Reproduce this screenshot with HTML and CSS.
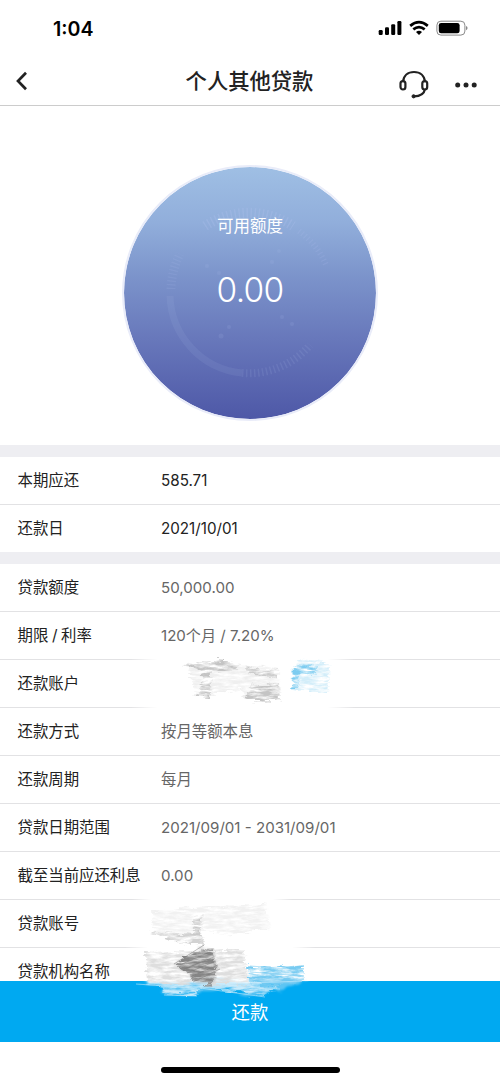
FILE: index.html
```html
<!DOCTYPE html>
<html lang="zh-CN">
<head>
<meta charset="utf-8">
<title>个人其他贷款</title>
<link rel="stylesheet" href="styles.css">
</head>
<body>
<div class="app">
  <header class="top">
    <div class="status">
      <span class="time">1:04</span>
      <svg class="status-icons" width="90" height="16" viewBox="0 0 90 16">
        <rect x="0.7" y="10" width="4" height="5" rx="1.2"/>
        <rect x="7" y="7.3" width="4" height="7.7" rx="1.2"/>
        <rect x="13.2" y="4.2" width="4" height="10.8" rx="1.2"/>
        <rect x="19.4" y="1" width="4" height="14" rx="1.2"/>
        <g fill="none" stroke="#000" stroke-width="2.7">
          <path d="M32.2 5.9Q41 -1.5 49.8 5.9"/>
          <path d="M35.3 9.4Q41 4.7 46.7 9.4"/>
        </g>
        <path d="M38 12Q41 9.7 44 12L41 15Z"/>
        <rect x="58.9" y="1.2" width="28" height="13.9" rx="4" fill="none" stroke="#888" stroke-width="1"/>
        <rect x="60.8" y="3" width="20.8" height="10.3" rx="2.3"/>
        <path d="M88 6V10.2Q89.6 9.6 89.6 8.1T88 6Z" fill="#888"/>
      </svg>
    </div>
    <nav class="nav">
      <svg class="back" width="12" height="20" viewBox="0 0 12 20"><path d="M10 1.8L2 10L10 18.2"/></svg>
      <h1 class="title">个人其他贷款</h1>
      <div class="actions">
        <svg class="headset" width="30" height="30" viewBox="0 0 30 30">
          <path d="M4 12.2C4.5 5.5 9 2 15 2S25.5 5.5 26 12.2"/>
          <rect x="1.5" y="11.2" width="4.9" height="8.3" rx="2.4"/>
          <rect x="23.3" y="11.2" width="4.9" height="8.3" rx="2.4"/>
          <path d="M26 19C25 24.5 21 26.3 15 26.3"/>
          <circle cx="14.6" cy="26.3" r="1.6" fill="#222" stroke-width="1"/>
        </svg>
        <svg width="22" height="6" viewBox="0 0 22 6"><circle cx="2.7" cy="3" r="2.5"/><circle cx="11" cy="3" r="2.5"/><circle cx="19.2" cy="3" r="2.5"/></svg>
      </div>
    </nav>
  </header>
  <section class="hero">
    <div class="dial">
      <svg class="rings" width="252" height="252" viewBox="0 0 252 252">
        <g fill="none" stroke="#b4c2f0">
          <path d="M46 129A80 80 0 0 0 118 206" stroke-width="7" opacity=".1"/>
          <path d="M118 206A80 80 0 0 0 186 178" stroke-width="8" stroke-dasharray="1.5 2.5" opacity=".12"/>
          <path d="M47 122A80 80 0 0 1 56 87" stroke-width="9" stroke-dasharray="1.3 2.3" opacity=".14"/>
          <path d="M81 59A80 80 0 0 1 169 59" stroke-width="10" stroke-dasharray="1.5 2.5" opacity=".25"/>
          <path d="M175 64A80 80 0 0 1 202 98" stroke-width="6" stroke-dasharray="1.3 2.5" opacity=".16"/>
        </g>
        <g fill="#b4c2f0" opacity=".12">
          <circle cx="83" cy="99" r="2"/><circle cx="95" cy="106" r="2"/><circle cx="148" cy="95" r="2"/><circle cx="155" cy="84" r="2"/>
          <circle cx="97" cy="169" r="2.5"/><circle cx="105" cy="160" r="2"/><circle cx="158" cy="150" r="2"/><circle cx="168" cy="157" r="2"/>
        </g>
      </svg>
      <span class="dial-label">可用额度</span>
      <span class="dial-value">0.00</span>
    </div>
  </section>
  <main class="details">
    <dl class="group due">
      <div class="row"><dt>本期应还</dt><dd>585.71</dd></div>
      <div class="row"><dt>还款日</dt><dd>2021/10/01</dd></div>
    </dl>
    <dl class="group">
      <div class="row"><dt>贷款额度</dt><dd>50,000.00</dd></div>
      <div class="row"><dt class="term">期限 / 利率</dt><dd>120个月 / 7.20%</dd></div>
      <div class="row"><dt>还款账户</dt><dd></dd></div>
      <div class="row"><dt>还款方式</dt><dd class="cjk">按月等额本息</dd></div>
      <div class="row"><dt>还款周期</dt><dd class="cjk">每月</dd></div>
      <div class="row"><dt>贷款日期范围</dt><dd>2021/09/01 - 2031/09/01</dd></div>
      <div class="row"><dt>截至当前应还利息</dt><dd>0.00</dd></div>
      <div class="row"><dt>贷款账号</dt><dd></dd></div>
      <div class="row"><dt>贷款机构名称</dt><dd></dd></div>
    </dl>
  </main>
  <button class="pay">还款</button>
  <footer class="home"><span class="home-bar"></span></footer>

  <svg class="smudge account" width="230" height="65" viewBox="0 0 230 65">
    <defs>
      <filter id="chalk" x="-10%" y="-10%" width="120%" height="120%" color-interpolation-filters="sRGB">
        <feTurbulence type="fractalNoise" baseFrequency="0.07 0.33" numOctaves="4" seed="4" result="n"/>
        <feColorMatrix in="n" values="0 0 0 0 0  0 0 0 0 0  0 0 0 0 0  2.6 0 0 0 -0.7" result="m"/>
        <feDisplacementMap in="SourceGraphic" in2="n" scale="11" xChannelSelector="R" yChannelSelector="G" result="d"/>
        <feComposite in="d" in2="m" operator="in"/>
        <feGaussianBlur stdDeviation="0.6"/>
      </filter>
      <filter id="rough" x="-10%" y="-20%" width="120%" height="140%" color-interpolation-filters="sRGB">
        <feTurbulence type="fractalNoise" baseFrequency="0.03 0.25" numOctaves="2" seed="8"/>
        <feDisplacementMap in="SourceGraphic" scale="12" xChannelSelector="R" yChannelSelector="G"/>
        <feGaussianBlur stdDeviation="0.8"/>
      </filter>
      <linearGradient id="fade">
        <stop offset="0" stop-color="#fff" stop-opacity="0"/>
        <stop offset=".12" stop-color="#fff"/>
        <stop offset=".88" stop-color="#fff"/>
        <stop offset="1" stop-color="#fff" stop-opacity="0"/>
      </linearGradient>
    </defs>
    <rect y="4" width="225" height="56" fill="url(#fade)"/>
    <g filter="url(#chalk)">
      <path d="M58 15L110 15L148 18L149 49L115 50L112 38L82 46L66 45Z" fill="#efefef"/>
      <path d="M54 14L70 12L89 11L110 14L105 20L82 22L81 47L66 46L74 28L70 19Z" fill="#c4c4c4"/>
      <path d="M115 17L148 20L148 28L120 24Z" fill="#ccc"/>
      <path d="M120 35L149 33L150 51L116 51Z" fill="#c4c4c4"/>
      <path d="M166 9L192 12L200 15L198 44L162 40L163 23Z" fill="#d2edf9"/>
      <path d="M166 14L188 16L186 24L170 24L168 37L162 38Z" fill="#7dccf0"/>
    </g>
  </svg>
  <svg class="smudge institution" width="220" height="120" viewBox="0 0 220 120">
    <rect x="12" y="8" width="160" height="12" fill="url(#fade)"/>
    <rect x="5" y="55" width="190" height="12" fill="url(#fade)"/>
    <path d="M22 64H182L185 80L186 94L164 97L100 101L26 98Z" fill="#fff" filter="url(#rough)"/>
    <path d="M17 98L184 94L166 102L160 108L154 101L144 112L108 105L84 106L76 110L46 111L42 102Z" fill="#8fd4f5" opacity=".65" filter="url(#rough)"/>
    <g filter="url(#chalk)">
      <path d="M32 26L145 18L150 44L114 50L83 45L80 59L52 54L33 48Z" fill="#f1f1f1"/>
      <path d="M73 31L83 28L81 45L85 60L54 57L74 48Z" fill="#c8c8c8"/>
      <path d="M30 47L80 50L84 59L52 55Z" fill="#d2d2d2"/>
      <path d="M26 67L124 65L129 98L104 105L28 98Z" fill="#dedede"/>
      <path d="M128 79L150 82L184 80L184 94L165 100L129 100Z" fill="#78cbf1"/>
      <path d="M25 99L130 99L158 102L142 111L102 105L80 104L77 110L44 110L43 103Z" fill="#caeafa"/>
    </g>
    <path d="M56 79L82 63L94 67L97 85L92 99L77 99L68 88Z" fill="#aaa" opacity=".55" filter="url(#rough)"/>
    <path d="M56 79L82 63L94 67L97 85L92 99L77 99L68 88Z" fill="#858585" filter="url(#chalk)"/>
    <path d="M54 79L84 60M62 79L90 67M64 84L94 72M67 88L96 76M70 92L98 80M73 97L100 84" stroke="#777" fill="none" opacity=".5"/>
    <path d="M130 81L183 85M130 87L183 91M132 92L175 96" stroke="#68c5f1" fill="none" opacity=".5"/>
    <path d="M16 99L75 103M42 106L77 104M44 110L77 111M80 103L145 112M100 101L160 104M130 98L182 96" stroke="#c5e9fa" fill="none" opacity=".6"/>
  </svg>
</div>
</body>
</html>
```
FILE: styles.css
```css
* { box-sizing: border-box; }
body {
  margin: 0;
  background: #fff;
  color: #222;
  font-family: Inter, "Noto Sans CJK SC", sans-serif;
}
.app {
  position: relative;
  width: 500px;
  height: 1082px;
  display: flex;
  flex-direction: column;
  overflow: hidden;
}
.top {
  height: 106px;
  flex: none;
  border-bottom: 1px solid #ccc;
}
.status {
  height: 57px;
  display: flex;
  justify-content: space-between;
  align-items: center;
  padding: 0 32px 0 53px;
}
.status-icons { margin-top: -1px; }
.time { font-size: 19.6px; font-weight: 600; line-height: 24px; color: #000; }
.nav {
  height: 48px;
  display: grid;
  grid-template-columns: 84px 1fr 101px;
  align-items: center;
  padding: 0 0 0 16px;
}
.back { fill: none; stroke: #222; stroke-width: 2.7; }
.title {
  margin: 0;
  text-align: center;
  font-size: 21.3px;
  font-weight: 500;
  line-height: 30px;
  white-space: nowrap;
}
.actions {
  display: flex;
  align-items: center;
  gap: 26px;
  padding-top: 7px;
}
.actions svg { flex: none; fill: #222; }
.actions .headset { fill: none; stroke: #222; stroke-width: 2.2; }
.hero {
  height: 339px;
  flex: none;
  display: flex;
  justify-content: center;
  padding-top: 59px;
}
.dial {
  position: relative;
  width: 256px;
  height: 256px;
  border: 2px solid #e9ecf9;
  border-radius: 50%;
  background: linear-gradient(#9fbfe4 0%, #91aedb 22%, #7c94cb 43%, #6878bb 68%, #4e58a7 100%) padding-box;
  color: #fff;
  display: flex;
  flex-direction: column;
  align-items: center;
  padding-top: 46px;
}
.rings { position: absolute; inset: 0; }
.dial-label { position: relative; font-size: 16.5px; line-height: 26px; }
.dial-value { position: relative; font-size: 33.5px; font-weight: 300; line-height: 44px; margin-top: 29px; letter-spacing: -0.7px; }
.details { height: 536px; flex: none; overflow: hidden; }
.group { margin: 0; border-top: 12px solid #eeeef2; }
.due .row:last-child { border-bottom: 0; height: 47px; }
.row {
  height: 48px;
  display: grid;
  grid-template-columns: 143px 1fr;
  align-items: center;
  padding: 0 18px;
  border-bottom: 1px solid #e2e2e4;
  font-size: 15.4px;
  line-height: 24px;
  white-space: nowrap;
}
dt, dd { margin: 0; }
dt { margin-left: -0.5px; }
.term { word-spacing: -0.7px; }
dd { color: #666; font-size: 15.1px; }
dd.cjk { font-size: 15.4px; }
.due dd { color: #222; font-size: 15.2px; }
.pay {
  height: 61px;
  flex: none;
  border: 0;
  padding: 0;
  background: #00a9f1;
  color: #fff;
  font: 400 18.4px/28px Inter, "Noto Sans CJK SC", sans-serif;
}
.home { flex: 1; display: flex; justify-content: center; align-items: flex-start; padding-top: 25px; }
.home-bar { width: 179px; height: 6px; border-radius: 3px; background: #000; }
.smudge { position: absolute; }
.account { left: 130px; top: 650px; }
.institution { left: 120px; top: 885px; }
```
